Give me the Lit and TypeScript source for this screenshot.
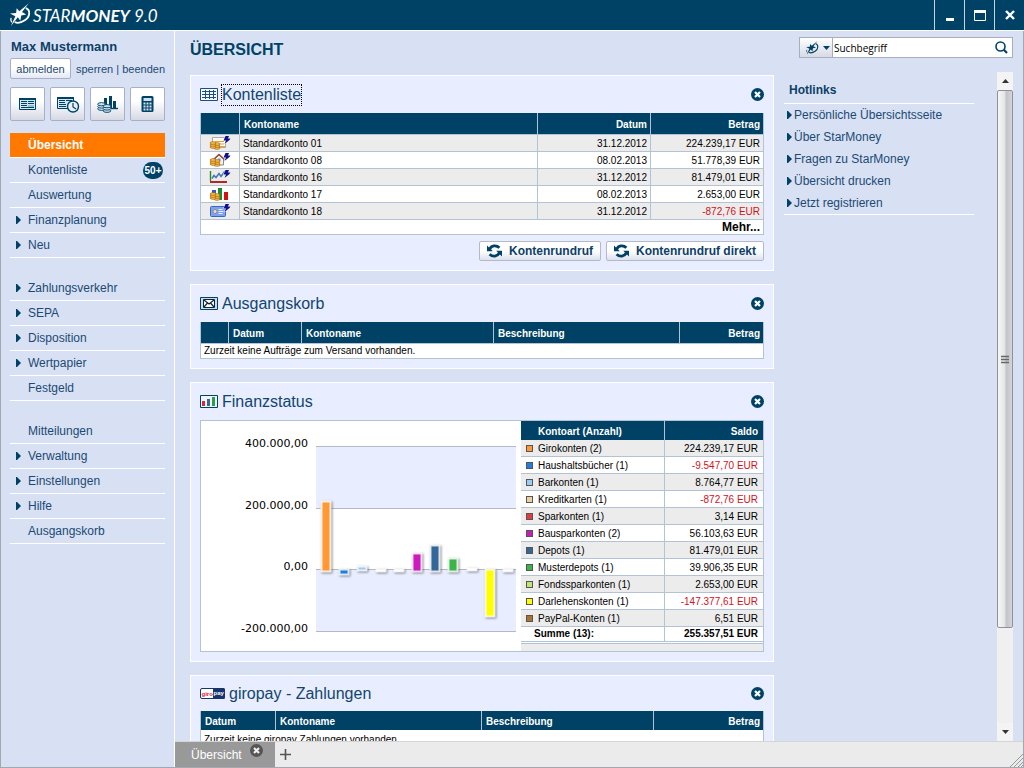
import { LitElement, html, css, svg, nothing } from "lit";
import { customElement, property } from "lit/decorators.js";
import { classMap } from "lit/directives/class-map.js";

const base = css`
  :host { display: block; }
  *, *::before, *::after { box-sizing: border-box; }
  a { color: inherit; text-decoration: none; }
  button { font: inherit; color: inherit; padding: 0; margin: 0; cursor: pointer; }
  svg { display: block; flex: none; }
`;

const NAVY = "#004266";

/* ---------- icons ---------- */

const star = (color: string, w: number, h: number) => html`
  <svg width=${w} height=${h} viewBox="0 0 22 24" aria-hidden="true">
    <path fill=${color} d="M19.500 0 L12.600 8.800 L17 11.600 L11.800 12.400 L10.800 18 L8.200 14.400 L1 23.500 L5.600 13.400 L0 10.400 L6.400 9.800 L7 5 L9.800 8.200 Z"/>
    <path fill="none" stroke=${color} stroke-width="1.900" d="M16.500 4.800 C21.500 6.500 21.500 13.500 15.500 17.600 C11 20.600 7 20.600 5 19.400"/>
    <path fill="none" stroke=${color} stroke-width="1.300" d="M1.200 15 C.6 17 1 18.500 2 19.600"/>
  </svg>`;

const closeIcon = (bg: string, fg = "#fff") => html`
  <svg width="13" height="13" viewBox="0 0 13 13" aria-hidden="true">
    <circle cx="6.5" cy="6.5" r="6.5" fill=${bg}/>
    <path d="M4 4 L9 9 M9 4 L4 9" stroke=${fg} stroke-width="2.2"/>
  </svg>`;

const refresh = html`
  <svg width="15" height="14" viewBox="0 0 15 14" aria-hidden="true">
    <g fill="none" stroke=${NAVY} stroke-width="2.8">
      <path d="M2.6 5.4 C4.2 1.2 9.4 0.8 12.4 3.8"/>
      <path d="M12.4 8.6 C10.8 12.8 5.6 13.2 2.6 10.2"/>
    </g>
    <path fill=${NAVY} d="M0 1.6 L0 7.2 L5.8 7.2 Z M15 12.4 L15 6.8 L9.2 6.8 Z"/>
  </svg>`;

const arrow = html`
  <svg class="arrow" width="5" height="8" viewBox="0 0 5 8" aria-hidden="true"><path fill=${NAVY} d="M0 0 L1 0 L5 4 L1 8 L0 8 Z"/></svg>`;

const toolIcons = {
  list: html`<svg width="17" height="12" viewBox="0 0 17 12"><path d="M.5 .5h16v11h-16z" fill="#d4e6f2" stroke=${NAVY}/><path d="M0 1h17" stroke=${NAVY} stroke-width="2"/><path d="M2 3.500h6M9 3.500h6M2 5.500h6M9 5.500h6M2 7.500h6M2 9.500h13" stroke=${NAVY}/><path d="M9 7h6v2h-6z" fill="#8fbcd8"/></svg>`,
  clock: html`<svg width="24" height="17" viewBox="0 0 24 17"><path d="M1.500 1.500h16v11h-16z" fill="#d4e6f2" stroke=${NAVY}/><path d="M1 2h17" stroke=${NAVY} stroke-width="2"/><path d="M3 4.500h6M10 4.500h6M3 6.500h6M3 8.500h7M3 10.500h7" stroke=${NAVY}/><circle cx="17" cy="10.500" r="5.500" fill="#e8f1fa" stroke=${NAVY} stroke-width="1.400"/><path d="M17 7v4l3 2" fill="none" stroke=${NAVY} stroke-width="1.200"/></svg>`,
  coins: html`<svg width="21" height="17" viewBox="0 0 21 17"><path d="M7 2h3v7h-3zM12 0h3v12h-3zM16 5h3v8h-3z" fill=${NAVY}/><path d="M12 12.500h9" stroke=${NAVY} stroke-width="1.400"/><g fill="#cfe2f0" stroke=${NAVY} stroke-width=".9"><ellipse cx="4.500" cy="12.800" rx="3.800" ry="1.600"/><ellipse cx="4.500" cy="10.500" rx="3.800" ry="1.600"/><ellipse cx="4.500" cy="8.200" rx="3.800" ry="1.600"/><ellipse cx="10" cy="14.800" rx="3.800" ry="1.600"/><ellipse cx="10" cy="12.500" rx="3.800" ry="1.600"/><ellipse cx="10" cy="10.200" rx="3.800" ry="1.600"/></g></svg>`,
  calc: html`<svg width="13" height="16" viewBox="0 0 13 16"><rect x=".5" width="12" height="16" rx="1.500" fill=${NAVY}/><path fill="#cfe2f0" d="M2.500 2h8v3h-8zM2.500 6.500h2v2h-2zM5.500 6.500h2v2h-2zM8.500 6.500h2v2h-2zM2.500 9.500h2v2h-2zM5.500 9.500h2v2h-2zM8.500 9.500h2v2h-2zM2.500 12.500h2v2h-2zM5.500 12.500h2v2h-2zM8.500 12.500h2v2h-2z"/></svg>`,
};

const panelIcons: Record<string, unknown> = {
  grid: html`<svg width="18" height="13" viewBox="0 0 18 13"><path d="M.5 .5h17v12h-17z" fill="#f4f8ff" stroke="#1e4f7c"/><path d="M2 3.500h14M2 6.500h14M2 9.500h14M5.500 2v9M9.500 2v9M13.500 2v9" stroke="#1e4f7c"/></svg>`,
  mail: html`<svg width="18" height="13" viewBox="0 0 18 13"><path d="M.5 .5h17v12h-17z" fill="#c9ddf0" stroke=${NAVY}/><path d="M3.500 2.500h11v8h-11z" fill="#fff" stroke="#123"/><path d="M4 3l5 4 5-4M4 10l3.500-4M14 10l-3.500-4" fill="none" stroke="#123" stroke-width="1.200"/></svg>`,
  bars: html`<svg width="18" height="13" viewBox="0 0 18 13"><path d="M.5 .5h17v12h-17z" fill="#eef4ff" stroke=${NAVY}/><path fill="#d92b2b" d="M2 6h3v5h-3z"/><path fill="#3c6590" d="M7 4h3v7h-3z"/><path fill="#2f9e41" d="M12 2h3v9h-3z"/></svg>`,
  giropay: html`<svg width="25" height="11" viewBox="0 0 25 11"><rect x=".5" y=".5" width="24" height="10" rx="1.500" fill="#fff" stroke="#16356e"/><path d="M13 0h10.500a1.500 1.500 0 0 1 1.500 1.500v8a1.500 1.500 0 0 1-1.500 1.500H13z" fill="#16356e"/><text x="1.500" y="7.500" font-family="Liberation Sans" font-size="6" font-weight="700" fill="#d8203a">giro</text><text x="13.500" y="7" font-family="Liberation Sans" font-size="6" font-weight="700" fill="#fff">pay</text></svg>`,
};

const bolt = svg`<path fill="#10108c" stroke="#fff" stroke-width=".8" paint-order="stroke" d="M16.500 0h3.500l-1 2.500h2.500l-1 1.500-5 4 1.500-3.500h-2.500z"/>`;
const coinStack = (x: number, y: number) => svg`<g fill="#f9c650" stroke="#a8620c" stroke-width=".7">
  <ellipse cx=${x + 7} cy=${y + 7} rx="3" ry="1.300"/><ellipse cx=${x + 7} cy=${y + 5} rx="3" ry="1.300"/><ellipse cx=${x + 7} cy=${y + 3} rx="3" ry="1.300"/>
  <ellipse cx=${x + 3} cy=${y + 6} rx="3" ry="1.300"/><ellipse cx=${x + 3} cy=${y + 4} rx="3" ry="1.300"/><ellipse cx=${x + 3} cy=${y + 2} rx="3" ry="1.300"/></g>`;

const accountIcons: Record<string, unknown> = {
  giro: svg`<path d="M3.500 1.500h13v10h-13z" fill="#fffdf2" stroke="#a9a9a9"/><path d="M6 5.500h9M8 8h7M9 10.500h7" stroke="#e8a040" stroke-width="1.200"/>${coinStack(1, 5)}${bolt}`,
  house: svg`<path d="M5.500 6l4.500-4 4.500 4v6h-9z" fill="#f4f0ea" stroke="#8a8a8a"/><path d="M4.500 6.500l5.500-5 5.500 5" fill="none" stroke="#8a4a44" stroke-width="1.400"/><path d="M9 5.500h2.500v3h-2.500z" fill="#7f97c4"/>${coinStack(1, 5)}${bolt}`,
  curve: svg`<path d="M3 8.500l2-3 2 2 3-4 2 3 4-5.500" fill="none" stroke="#4a74b0" stroke-width="1.500"/><path d="M1.500 1v10" stroke="#25882c" stroke-width="1.400"/><path d="M1 12h17" stroke="#b52626" stroke-width="2"/>${bolt}`,
  fund: svg`<path d="M3 3h4v6h-4z" fill="#3c54c8"/><path d="M9 1h4v12h-4z" fill="#1d8a30"/><path d="M15 5h4v8h-4z" fill="#d01212"/>${coinStack(1, 5)}`,
  card: svg`<rect x="1.500" y="2.500" width="15" height="10" rx="1" fill="#7fa2ec" stroke="#3d63c4"/><circle cx="6" cy="7.500" r="2" fill="#ffdf9a" stroke="#6f7fa8" stroke-width=".8"/><path d="M9.500 5.500h4M9.500 7.500h5M9.500 9.500h4" stroke="#e4ecff"/>${bolt}`,
};

/* ---------- panel ---------- */

@customElement("sm-panel")
class SmPanel extends LitElement {
  @property() heading = "";
  @property() icon = "";
  @property({ type: Boolean }) focused = false;
  @property({ type: Boolean }) dense = false;

  static styles = [base, css`
    .panel { background: #e8edff; border: 1px solid #fff; padding: 0 9px 9px; }
    header { display: flex; align-items: center; height: 37px; gap: 3px; }
    header.dense { height: 35px; }
    h2 { margin: 0; font-size: 16px; line-height: 20px; font-weight: 400; color: #12456e; border: 1px solid transparent; }
    h2.focused { border: 1px dotted #000; }
    .close { margin-left: auto; border: 0; background: none; }
  `];

  render() {
    return html`<section class="panel">
      <header class=${classMap({ dense: this.dense })}>
        ${panelIcons[this.icon]}
        <h2 class=${classMap({ focused: this.focused })}>${this.heading}</h2>
        <button class="close" aria-label="Schließen">${closeIcon(NAVY)}</button>
      </header>
      <slot></slot>
    </section>`;
  }
}

/* ---------- data ---------- */

const accounts = [
  ["giro", "Standardkonto 01", "31.12.2012", "224.239,17 EUR"],
  ["house", "Standardkonto 08", "08.02.2013", "51.778,39 EUR"],
  ["curve", "Standardkonto 16", "31.12.2012", "81.479,01 EUR"],
  ["fund", "Standardkonto 17", "08.02.2013", "2.653,00 EUR"],
  ["card", "Standardkonto 18", "31.12.2012", "-872,76 EUR"],
];

const kinds = [
  { name: "Girokonten (2)", saldo: "224.239,17 EUR", color: "#ff9933", top: 80, bottom: 151 },
  { name: "Haushaltsbücher (1)", saldo: "-9.547,70 EUR", color: "#1f7fe0", top: 148, bottom: 154 },
  { name: "Barkonten (1)", saldo: "8.764,77 EUR", color: "#99ccf5", top: 145, bottom: 150 },
  { name: "Kreditkarten (1)", saldo: "-872,76 EUR", color: "#f0cfa0", top: 148, bottom: 151 },
  { name: "Sparkonten (1)", saldo: "3,14 EUR", color: "#e83a3a", top: 148, bottom: 151 },
  { name: "Bausparkonten (2)", saldo: "56.103,63 EUR", color: "#cc1abf", top: 132, bottom: 151 },
  { name: "Depots (1)", saldo: "81.479,01 EUR", color: "#336699", top: 124, bottom: 151 },
  { name: "Musterdepots (1)", saldo: "39.906,35 EUR", color: "#3bb54a", top: 137, bottom: 151 },
  { name: "Fondssparkonten (1)", saldo: "2.653,00 EUR", color: "#bfe66e", top: 147, bottom: 150 },
  { name: "Darlehenskonten (1)", saldo: "-147.377,61 EUR", color: "#ffff00", top: 148, bottom: 196 },
  { name: "PayPal-Konten (1)", saldo: "6,51 EUR", color: "#b07030", top: 148, bottom: 151 },
];

const nav: { label: string; sub?: boolean; active?: boolean; badge?: string }[][] = [
  [
    { label: "Übersicht", active: true },
    { label: "Kontenliste", badge: "50+" },
    { label: "Auswertung" },
    { label: "Finanzplanung", sub: true },
    { label: "Neu", sub: true },
  ],
  [
    { label: "Zahlungsverkehr", sub: true },
    { label: "SEPA", sub: true },
    { label: "Disposition", sub: true },
    { label: "Wertpapier", sub: true },
    { label: "Festgeld" },
  ],
  [
    { label: "Mitteilungen" },
    { label: "Verwaltung", sub: true },
    { label: "Einstellungen", sub: true },
    { label: "Hilfe", sub: true },
    { label: "Ausgangskorb" },
  ],
];

const hotlinks = ["Persönliche Übersichtsseite", "Über StarMoney", "Fragen zu StarMoney", "Übersicht drucken", "Jetzt registrieren"];

/* ---------- sidebar ---------- */

@customElement("sm-sidebar")
class SmSidebar extends LitElement {
  static styles = [base, css`
    :host { width: 174px; flex: none; border-right: 1px solid #fff; padding: 6px 9px 0; font-size: 12px; color: #1b4a74; }
    .user { font-size: 13px; font-weight: 700; line-height: 20px; color: #0d4068; padding-left: 1px; }
    .session { display: flex; align-items: center; justify-content: space-between; height: 21px; margin-top: 1px; font-size: 11px; }
    .btn { border: 1px solid #aab0c4; border-radius: 2px; background: linear-gradient(#fff 50%, #e4e8f4); }
    .logout { width: 61px; height: 21px; }
    .tools { display: grid; grid-template-columns: repeat(4, 35px); justify-content: space-between; margin: 8px 0 12px; }
    .tool { height: 34px; display: grid; place-items: center; background: linear-gradient(#fff 40%, #d6d9e4); }
    ul { list-style: none; margin: 0 0 18px; padding: 0; }
    .item { display: flex; align-items: center; height: 25px; border-bottom: 1px solid #fff; padding: 0 2px 0 6px; }
    .mark { width: 12px; }
    .active { background: #ff7800; color: #fff; font-weight: 700; }
    .badge { margin-left: auto; width: 20px; height: 17px; border-radius: 9px; background: #004266; color: #fff; font-weight: 700; font-size: 10px; line-height: 17px; text-align: center; }
  `];

  render() {
    return html`
      <div class="user">Max Mustermann</div>
      <div class="session">
        <button class="btn logout">abmelden</button>
        <span><a href="#">sperren</a> | <a href="#">beenden</a></span>
      </div>
      <div class="tools">
        <button class="btn tool" aria-label="Kontenliste">${toolIcons.list}</button>
        <button class="btn tool" aria-label="Termine">${toolIcons.clock}</button>
        <button class="btn tool" aria-label="Auswertung">${toolIcons.coins}</button>
        <button class="btn tool" aria-label="Rechner">${toolIcons.calc}</button>
      </div>
      <nav>
        ${nav.map((group) => html`<ul>${group.map((n) => html`<li>
          <a href="#" class=${classMap({ item: true, active: !!n.active })}>
            <span class="mark">${n.sub ? arrow : nothing}</span>${n.label}
            ${n.badge ? html`<span class="badge">${n.badge}</span>` : nothing}
          </a></li>`)}</ul>`)}
      </nav>`;
  }
}

/* ---------- balance chart ---------- */

@customElement("sm-chart")
class SmChart extends LitElement {
  static styles = [base, css`
    svg { width: 100%; height: auto; }
    text { font: 11px "DejaVu Sans", sans-serif; text-anchor: end; fill: #000; }
    .bar { stroke: #fff; stroke-opacity: .8; stroke-width: 2; filter: drop-shadow(1px 1px 1px rgba(0, 0, 0, .45)); }
  `];

  render() {
    const axis: [string, number][] = [["400.000,00", 25], ["200.000,00", 87], ["0,00", 148], ["-200.000,00", 210]];
    return html`<svg viewBox="0 0 320 230" role="img" aria-label="Finanzstatus">
      <path d="M115 25h200v62h-200zM115 148h200v62h-200z" fill="#e8edff"/>
      ${axis.map(([label, y]) => svg`<path d="M115 ${y + 0.5}h200" stroke="#b4b9c6"/><text x="107" y=${y + 1}>${label}</text>`)}
      ${kinds.map((k, i) => svg`<rect class="bar" x=${120.5 + Math.round(i * 18.2)} y=${k.top + 0.5} width="9" height=${k.bottom - k.top - 1}
        fill=${k.bottom - k.top > 3 ? k.color : "#fff"}/>`)}
    </svg>`;
  }
}

/* ---------- page ---------- */

@customElement("app-root")
class AppRoot extends LitElement {
  static styles = [base, css`
    :host { display: flex; flex-direction: column; height: 100vh; overflow: hidden; font-family: "Liberation Sans", Arial, sans-serif; font-size: 12px; background: #d8e0f3; color: #1b4a74; }

    .titlebar { display: flex; height: 31px; flex: none; background: #004266; border-bottom: 1px solid #fff; color: #fff; }
    .brand { display: flex; align-items: center; padding-left: 10px; gap: 2px; font: italic 17px "Liberation Sans Narrow", "Lato", sans-serif; }
    .brand span { white-space: pre; }
    .wins { margin-left: auto; display: flex; }
    .win { width: 30px; border: 0; border-left: 1px solid #c5d3de; background: none; display: grid; place-items: center; }

    .frame { flex: 1; min-height: 0; display: flex; border: 1px solid #a3a7b0; border-top: 0; }
    main { flex: 1; min-width: 0; display: flex; flex-direction: column; }
    .head { display: flex; align-items: flex-start; justify-content: space-between; height: 41px; flex: none; padding: 6px 10px 0 15px; }
    h1 { margin: 0; font-size: 16px; line-height: 26px; color: #004266; }
    .search { display: flex; width: 214px; height: 21px; border: 1px solid #a9aebb; background: #fff; }
    .scope { display: flex; align-items: center; gap: 4px; width: 33px; padding-left: 6px; border: 0; border-right: 1px solid #a9aebb; background: linear-gradient(#fff, #d6dae6); }
    .search input { flex: 1; min-width: 0; border: 0; outline: 0; padding: 0 1px; background: none; font: 10px "Open Sans", sans-serif; color: #000; }
    .go { border: 0; background: none; width: 22px; display: grid; place-items: center; }

    .body { flex: 1; min-height: 0; display: grid; grid-template-columns: 1fr 190px 29px; column-gap: 10px; padding: 0 10px 0 15px; overflow: hidden; }
    .panels { display: flex; flex-direction: column; gap: 13px; padding-top: 3px; min-height: 0; overflow: hidden; }
    .panels > * { flex: none; }

    table { width: 100%; table-layout: fixed; border-spacing: 0; font-size: 10px; color: #000; background: #fff; border-left: 1px solid #b3c3d6; }
    th, td { padding: 0 3px; text-align: left; line-height: 14px; white-space: nowrap; border-right: 1px solid #b3c3d6; border-bottom: 1px solid #b3c3d6; }
    th { height: 22px; padding: 2px 4px 0; background: #004266; color: #fff; font-weight: 700; }
    td { height: 17px; padding-top: 1px; }
    tbody tr:nth-child(odd) td { background: #ececec; }
    th.num, td.num { text-align: right; padding-right: 3px; }
    td.neg { color: #d2121c; }
    td.pic { padding: 0; }
    td.pic svg { margin: 0 auto; }
    tbody tr.plain td, tfoot td { height: 15px; padding-top: 0; background: #fff; }
    td.more { text-align: right; font-size: 12px; font-weight: 700; }
    .dense th { height: 19px; border-bottom: 0; }
    .dense tr.plain td { height: 20px; }
    .c-icon { width: 39px; } .c-date { width: 113px; }
    .c-28 { width: 28px; } .c-73 { width: 73px; } .c-192 { width: 192px; } .c-186 { width: 186px; }
    .c-75 { width: 75px; } .c-206 { width: 206px; } .c-172 { width: 172px; } .c-98 { width: 98px; }

    .actions { display: flex; justify-content: flex-end; gap: 5px; margin-top: 6px; }
    .action { display: flex; align-items: center; gap: 7px; height: 20px; padding: 0 7px; border: 1px solid #b4b9c8; border-radius: 2px; background: linear-gradient(#fff 50%, #dde1ee); font-size: 12px; font-weight: 700; color: #0d4068; }

    .finance { display: grid; grid-template-columns: 1fr 242px; border: 1px solid #b3c3d6; background: #fff; }
    .side { display: flex; flex-direction: column; }
    .side table { border-left: 0; }
    .side th { height: 19px; border-bottom: 0; }
    .side th:first-child { padding-left: 17px; }
    .side td:first-child { padding-left: 5px; }
    .side th:last-child, .side td:last-child { border-right: 0; padding-right: 5px; }
    .side tfoot td { font-weight: 700; }
    .side tfoot td:first-child { padding-left: 13px; }
    .kind { display: flex; align-items: center; gap: 5px; }
    .swatch { width: 7px; height: 7px; border: 1px solid #555; flex: none; }
    .tail { flex: 1; margin-top: 1px; border-top: 1px solid #b3c3d6; background: #ececec; }

    .hot { padding-top: 3px; }
    .hot h3 { margin: 0; padding: 2px 5px 0; height: 29px; line-height: 26px; font-size: 12px; color: #0d4068; border-bottom: 1px solid #fff; }
    .hot ul { list-style: none; margin: 0; padding: 0; border-bottom: 1px solid #fff; }
    .hot a { display: flex; align-items: center; gap: 2px; height: 22px; padding-left: 3px; }

    .scroll { display: flex; flex-direction: column; justify-self: end; width: 16px; background: #f0f0f0; }
    .step { height: 18px; flex: none; border: 0; background: #f4f4f4; display: grid; place-items: center; }
    .track { flex: 1; min-height: 0; }
    .thumb { height: 85%; border: 1px solid #8f9197; border-radius: 2px; background: linear-gradient(90deg, #f6f6f6, #e6e7e8 45%, #c3c4c8 60%, #d4d5d8); display: grid; place-items: center; }

    .tabs { display: flex; align-items: center; flex: none; height: 26px; background: #ebebeb; border-top: 1px solid #d5d5d5; }
    .tab { display: flex; gap: 8px; align-self: stretch; width: 100px; padding-left: 16px; border: 0; background: #999; color: #fff; }
    .tab .name { line-height: 26px; }
    .tab svg { margin-top: 2px; }
    .add { border: 0; background: none; margin-left: 5px; }
    .grip { margin: auto 0 0 auto; }
  `];

  render() {
    return html`
      <header class="titlebar">
        <div class="brand">${star("#fff", 21, 24)}<span>STAR<b>MONEY</b> 9.0</span></div>
        <div class="wins">
          <button class="win" aria-label="Minimieren"><svg width="8" height="12" viewBox="0 0 8 12"><path d="M0 9h8v3H0z" fill="#fff"/></svg></button>
          <button class="win" aria-label="Maximieren"><svg width="12" height="11" viewBox="0 0 12 11"><path d="M.5 .5h11v10H.5z" fill="none" stroke="#fff"/><path d="M0 0h12v3H0z" fill="#fff"/></svg></button>
          <button class="win" aria-label="Schließen"><svg width="10" height="10" viewBox="0 0 10 10"><path d="M1 1l8 8M9 1l-8 8" stroke="#fff" stroke-width="2.400"/></svg></button>
        </div>
      </header>
      <div class="frame">
        <sm-sidebar></sm-sidebar>
        <main>
          <div class="head">
            <h1>ÜBERSICHT</h1>
            <form class="search" role="search">
              <button type="button" class="scope" aria-haspopup="true" aria-label="Suchbereich">${star(NAVY, 13, 14)}<svg width="7" height="4" viewBox="0 0 7 4"><path d="M0 0h7L3.500 4z" fill=${NAVY}/></svg></button>
              <input type="text" aria-label="Suchbegriff" .value=${"Suchbegriff"}>
              <button type="button" class="go" aria-label="Suchen"><svg width="13" height="13" viewBox="0 0 13 13"><circle cx="5.500" cy="5.500" r="4.500" fill="none" stroke=${NAVY} stroke-width="1.600"/><path d="M8.800 8.800L12 12" stroke=${NAVY} stroke-width="2.200"/></svg></button>
            </form>
          </div>
          <div class="body">
            <div class="panels">${this.accounts()}${this.outbox()}${this.finance()}${this.giropay()}</div>
            <aside class="hot">
              <h3>Hotlinks</h3>
              <ul>${hotlinks.map((h) => html`<li><a href="#">${arrow}${h}</a></li>`)}</ul>
            </aside>
            <div class="scroll">
              <button class="step" aria-label="Nach oben"><svg width="7" height="4" viewBox="0 0 7 4"><path d="M3.500 0L7 4H0z" fill="#333"/></svg></button>
              <div class="track"><div class="thumb"><svg width="8" height="9" viewBox="0 0 8 9"><path d="M0 1.500h8M0 4.500h8M0 7.500h8" stroke="#666" stroke-width="1.400"/></svg></div></div>
              <button class="step" aria-label="Nach unten"><svg width="7" height="4" viewBox="0 0 7 4"><path d="M0 0h7L3.500 4z" fill="#333"/></svg></button>
            </div>
          </div>
          <footer class="tabs">
            <button class="tab"><span class="name">Übersicht</span>${closeIcon("#555", "#eee")}</button>
            <button class="add" aria-label="Neuer Tab"><svg width="11" height="11" viewBox="0 0 11 11"><path d="M5.500 0v11M0 5.500h11" stroke="#555" stroke-width="1.600"/></svg></button>
            <svg class="grip" width="13" height="13" viewBox="0 0 13 13"><path d="M0 13L13 0M4 13l9-9M8 13l5-5M11 13l2-2" stroke="#999"/></svg>
          </footer>
        </main>
      </div>`;
  }

  private accounts() {
    return html`<sm-panel heading="Kontenliste" icon="grid" focused>
      <table>
        <colgroup><col class="c-icon"><col><col class="c-date"><col class="c-date"></colgroup>
        <thead><tr><th></th><th>Kontoname</th><th class="num">Datum</th><th class="num">Betrag</th></tr></thead>
        <tbody>${accounts.map(([icon, name, date, sum]) => html`<tr>
          <td class="pic"><svg width="22" height="14" viewBox="0 0 22 14" aria-hidden="true">${accountIcons[icon]}</svg></td>
          <td>${name}</td><td class="num">${date}</td>
          <td class=${classMap({ num: true, neg: sum.startsWith("-") })}>${sum}</td></tr>`)}</tbody>
        <tfoot><tr><td class="more" colspan="4"><a href="#">Mehr...</a></td></tr></tfoot>
      </table>
      <div class="actions">
        <button class="action">${refresh}Kontenrundruf</button>
        <button class="action">${refresh}Kontenrundruf direkt</button>
      </div>
    </sm-panel>`;
  }

  private outbox() {
    return html`<sm-panel heading="Ausgangskorb" icon="mail">
      <table>
        <colgroup><col class="c-28"><col class="c-73"><col class="c-192"><col class="c-186"><col></colgroup>
        <thead><tr><th></th><th>Datum</th><th>Kontoname</th><th>Beschreibung</th><th class="num">Betrag</th></tr></thead>
        <tbody><tr class="plain"><td colspan="5">Zurzeit keine Aufträge zum Versand vorhanden.</td></tr></tbody>
      </table>
    </sm-panel>`;
  }

  private finance() {
    return html`<sm-panel heading="Finanzstatus" icon="bars">
      <div class="finance">
        <sm-chart></sm-chart>
        <div class="side">
          <table>
            <colgroup><col><col class="c-98"></colgroup>
            <thead><tr><th>Kontoart (Anzahl)</th><th class="num">Saldo</th></tr></thead>
            <tbody>${kinds.map((k) => html`<tr>
              <td><span class="kind"><span class="swatch" style="background:${k.color}"></span>${k.name}</span></td>
              <td class=${classMap({ num: true, neg: k.saldo.startsWith("-") })}>${k.saldo}</td></tr>`)}</tbody>
            <tfoot><tr><td>Summe (13):</td><td class="num">255.357,51 EUR</td></tr></tfoot>
          </table>
          <div class="tail"></div>
        </div>
      </div>
    </sm-panel>`;
  }

  private giropay() {
    return html`<sm-panel heading="giropay - Zahlungen" icon="giropay" dense>
      <table class="dense">
        <colgroup><col class="c-75"><col class="c-206"><col class="c-172"><col></colgroup>
        <thead><tr><th>Datum</th><th>Kontoname</th><th>Beschreibung</th><th class="num">Betrag</th></tr></thead>
        <tbody><tr class="plain"><td colspan="4">Zurzeit keine giropay Zahlungen vorhanden.</td></tr></tbody>
      </table>
    </sm-panel>`;
  }
}
